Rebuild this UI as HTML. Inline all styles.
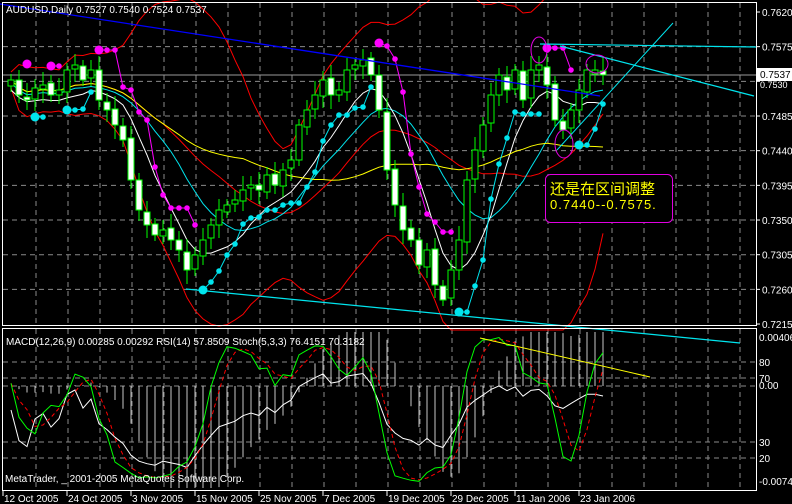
<!DOCTYPE html>
<html><head><meta charset="utf-8"><style>
html,body{margin:0;padding:0;background:#000;width:792px;height:504px;overflow:hidden}
svg{display:block}
text{font-family:"Liberation Sans","Noto Sans CJK SC",sans-serif;fill:#fff;font-size:11px}
</style></head><body>
<svg id="s" width="792" height="504" xmlns="http://www.w3.org/2000/svg">
<rect width="792" height="504" fill="#000"/>
<g id="grid"></g>
<g id="ind"></g>
<g id="cand"></g>
<g id="sub"></g>
<line x1="0" y1="4" x2="600" y2="96" stroke="#0000ff" stroke-width="1.3"/>
<line x1="540" y1="44" x2="756" y2="47" stroke="#00e5ee" stroke-width="1.2"/>
<line x1="560" y1="46" x2="754" y2="96" stroke="#00e5ee" stroke-width="1.2"/>
<line x1="557" y1="150" x2="673" y2="23" stroke="#00e5ee" stroke-width="1"/>
<line x1="186" y1="289" x2="740" y2="343" stroke="#00e5ee" stroke-width="1.2"/>
<line x1="480" y1="338" x2="650" y2="377" stroke="#ffff00" stroke-width="1"/>
<ellipse cx="539" cy="50" rx="8" ry="13" fill="none" stroke="#e000e0"/>
<ellipse cx="597" cy="64" rx="11" ry="9" fill="none" stroke="#e000e0"/>
<ellipse cx="564" cy="144" rx="9" ry="14" fill="none" stroke="#e000e0"/>
<rect x="545.5" y="174.5" width="127" height="48" rx="5" fill="#000" stroke="#e000e0"/>
<text x="550" y="194" style="fill:#ffff00;font-size:15px">还是在区间调整</text>
<text x="550" y="209" style="fill:#ffff00;font-size:13px;letter-spacing:1px">0.7440--0.7575.</text>
<text x="6" y="13" style="font-size:10px">AUDUSD,Daily  0.7527 0.7540 0.7524 0.7537</text>
<text x="6" y="345" style="font-size:10px">MACD(12,26,9) 0.00285 0.00292  RSI(14) 57.8509  Stoch(5,3,3) 76.4151 70.3182</text>
<text x="5" y="482" style="font-size:10px">MetaTrader, _ 2001-2005 MetaQuotes Software Corp.</text>
<rect x="2.5" y="2.5" width="754" height="323" fill="none" stroke="#fff"/>
<rect x="2.5" y="328.5" width="754" height="162" fill="none" stroke="#fff"/>
<g id="axis"></g>
</svg>
<script>
var NS="http://www.w3.org/2000/svg";
function el(p,t,a){var e=document.createElementNS(NS,t);for(var k in a)e.setAttribute(k,a[k]);p.appendChild(e);return e}
var G=document.getElementById('grid'),I=document.getElementById('ind'),C=document.getElementById('cand'),S=document.getElementById('sub'),A=document.getElementById('axis');
for(var k=1;k<24;k++){var x=4+32*k;if(x>756)break;
 el(G,'line',{x1:x,y1:3,x2:x,y2:325,stroke:'#8a8a8a','stroke-dasharray':'5,4'});
 el(G,'line',{x1:x,y1:329,x2:x,y2:490,stroke:'#8a8a8a','stroke-dasharray':'5,4'});}
var prices=["0.7620","0.7575","0.7530","0.7485","0.7440","0.7395","0.7350","0.7305","0.7260","0.7215"];
for(var i=0;i<10;i++){var y=12+i*34.67;
 if(i>0&&i<9)el(G,'line',{x1:3,y1:y,x2:756,y2:y,stroke:'#8a8a8a','stroke-dasharray':'5,4'});
 el(A,'line',{x1:756,y1:y,x2:760,y2:y,stroke:'#fff'});
 if(i!=2){var t=el(A,'text',{x:762,y:y+4,style:'font-size:10px'});t.textContent=prices[i];}}
el(G,'line',{x1:3,y1:75,x2:756,y2:75,stroke:'#9a9a9a'});
el(A,'rect',{x:757,y:68,width:35,height:13,fill:'#fff'});
var t=el(A,'text',{x:760,y:78,style:'font-size:10px;fill:#000'});t.textContent="0.7537";
var t=el(A,'text',{x:760,y:88,style:'font-size:9px'});t.textContent="0.7530";
[[362,"80"],[378,"70"],[442,"30"],[458,"20"]].forEach(function(a){
 el(G,'line',{x1:3,y1:a[0],x2:756,y2:a[0],stroke:'#8a8a8a','stroke-dasharray':'5,4'});
 var t=el(A,'text',{x:759,y:a[0]+4,style:'font-size:10px'});t.textContent=a[1];});
el(G,'line',{x1:3,y1:386,x2:756,y2:386,stroke:'#8a8a8a','stroke-dasharray':'5,4'});
[[341,"0.00406"],[389,"0.00"],[485,"-0.0074"]].forEach(function(a){var t=el(A,'text',{x:759,y:a[0],style:'font-size:10px'});t.textContent=a[1];});
var dates=["12 Oct 2005","24 Oct 2005","3 Nov 2005","15 Nov 2005","25 Nov 2005","7 Dec 2005","19 Dec 2005","29 Dec 2005","11 Jan 2006","23 Jan 2006"];
var dx=[3,67,131,195,259,323,387,451,515,579];
for(var i=0;i<10;i++){el(A,'line',{x1:dx[i],y1:491,x2:dx[i],y2:496,stroke:'#fff'});var t=el(A,'text',{x:dx[i]+1,y:502,style:'font-size:10px'});t.textContent=dates[i];}
var c=[80,95,100,88,85,95,90,70,65,80,70,100,110,125,140,180,210,225,235,230,240,250,270,255,240,225,210,205,200,190,185,190,175,185,170,160,125,110,95,80,95,90,70,65,60,75,110,170,205,230,240,265,250,285,300,270,240,180,150,125,95,75,90,70,100,70,65,85,120,130,110,90,70,70,75];
var n=c.length,X=function(i){return 11+8*i};
function sma(p){return c.map(function(v,i){var s=0,m=0;for(var j=Math.max(0,i-p+1);j<=i;j++){s+=c[j];m++}return s/m})}
function line(arr,col,w,st){var d='';arr.forEach(function(v,i){if(v==null)return;d+=(d?'L':'M')+X(i)+' '+v.toFixed(1)});var a={d:d,fill:'none',stroke:col,'stroke-width':w||1};if(st)a['stroke-dasharray']=st;el(I,'path',a)}
var m20=sma(20),up=[],lo=[];
for(var i=0;i<n;i++){var s=0,m=0;for(var j=Math.max(0,i-19);j<=i;j++){s+=(c[j]-m20[i])*(c[j]-m20[i]);m++}var sd=Math.sqrt(s/m);up.push(Math.max(-5,m20[i]-2*sd-8));lo.push(Math.min(330,m20[i]+2*sd+8));}
line(up,'#ff0000');line(lo,'#ff0000');line(m20,'#ff0000');
line(sma(14).map(function(v){return v+3}),'#00e5ee');
line(sma(8).map(function(v){return v+10}),'#ffffff');
line(sma(30),'#ffff00');
var H=[],L=[];
for(var i=0;i<n;i++){var o=i?c[i-1]+((i*7)%5-2):c[i]+6,cl=c[i];if(Math.abs(o-cl)<3)o=cl+4;
 var hi=Math.min(o,cl)-6-(i*13)%9,lw=Math.max(o,cl)+6+(i*11)%9;H.push(hi);L.push(lw);
 el(C,'line',{x1:X(i),y1:hi,x2:X(i),y2:lw,stroke:'#00ff00'});
 var bull=cl<o;el(C,'rect',{x:X(i)-3,y:Math.min(o,cl),width:6,height:Math.abs(o-cl),fill:bull?'#000':'#fff',stroke:'#00ff00'});}
var m8=sma(8),prev=null;
for(var i=2;i<n;i++){var down=c[i]>m8[i]-2;var y=down?Math.min(H[i-1],H[i-2],H[i])-6:Math.max(L[i-1],L[i-2],L[i])+6;
 var col=down?'#ff00ff':'#00e5ee';
 if(prev&&prev.d==down)el(C,'line',{x1:X(i-1),y1:prev.y,x2:X(i),y2:y,stroke:col});
 el(C,'circle',{cx:X(i),cy:y,r:(prev&&prev.d==down)?2.8:4.5,fill:col});prev={d:down,y:y};}
var ema=function(p){var k=2/(p+1),r=[],e=c[0];c.forEach(function(v){e=e+k*(v-e);r.push(e)});return r};
var e12=ema(12),e26=ema(26);
for(var i=0;i<n;i++){var mv=(e26[i]-e12[i])*2.6;var y=386-mv;y=Math.max(332,Math.min(488,y));el(S,'line',{x1:X(i),y1:386,x2:X(i),y2:y,stroke:'#c8c8c8'});}
var K=[];for(var i=0;i<n;i++){var mx=-1e9,mn=1e9;for(var j=Math.max(0,i-4);j<=i;j++){mx=Math.max(mx,L[j]);mn=Math.min(mn,H[j])}K.push((mx-c[i])/(mx-mn)*100)}
var Ks=K.map(function(v,i){var s=0,m=0;for(var j=Math.max(0,i-2);j<=i;j++){s+=K[j];m++}return s/m});
var Dd=Ks.map(function(v,i){var s=0,m=0;for(var j=Math.max(0,i-2);j<=i;j++){s+=Ks[j];m++}return s/m});
function sl(arr,col,st){var d='';arr.forEach(function(v,i){d+=(d?'L':'M')+X(i)+' '+(362+(80-v)*1.6).toFixed(1)});var a={d:d,fill:'none',stroke:col};if(st)a['stroke-dasharray']=st;el(S,'path',a)}
var R=[];var ag=1,al=1;for(var i=0;i<n;i++){var d=i?c[i-1]-c[i]:0;ag=(ag*13+Math.max(d,0))/14;al=(al*13+Math.max(-d,0))/14;R.push(100-100/(1+ag/al))}
sl(R,'#ffffff');sl(Dd,'#ff0000','4,3');sl(Ks,'#00ff00');
</script>
</body></html>
